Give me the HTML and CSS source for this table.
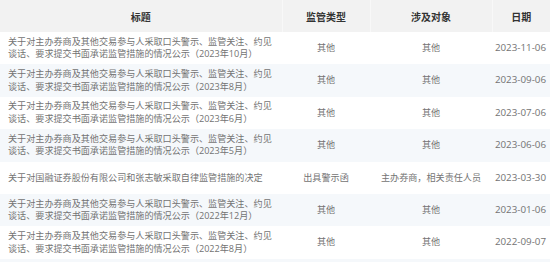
FILE: index.html
```html
<!DOCTYPE html>
<html lang="zh-CN">
<head>
<meta charset="utf-8">
<title>监管措施</title>
<link rel="stylesheet" href="styles.css">
</head>
<body>
<table class="reg-table">
  <colgroup>
    <col class="c-title">
    <col class="c-type">
    <col class="c-target">
    <col class="c-date">
  </colgroup>
  <thead>
    <tr>
      <th>标题</th>
      <th>监管类型</th>
      <th>涉及对象</th>
      <th class="last">日期</th>
    </tr>
  </thead>
  <tbody>
    <tr>
      <td class="title">关于对主办券商及其他交易参与人采取口头警示、监管关注、约见<br>谈话、要求提交书面承诺监管措施的情况公示（2023年10月）</td>
      <td>其他</td>
      <td>其他</td>
      <td class="date">2023-11-06</td>
    </tr>
    <tr class="alt">
      <td class="title">关于对主办券商及其他交易参与人采取口头警示、监管关注、约见<br>谈话、要求提交书面承诺监管措施的情况公示（2023年8月）</td>
      <td>其他</td>
      <td>其他</td>
      <td class="date">2023-09-06</td>
    </tr>
    <tr>
      <td class="title">关于对主办券商及其他交易参与人采取口头警示、监管关注、约见<br>谈话、要求提交书面承诺监管措施的情况公示（2023年6月）</td>
      <td>其他</td>
      <td>其他</td>
      <td class="date">2023-07-06</td>
    </tr>
    <tr class="alt">
      <td class="title">关于对主办券商及其他交易参与人采取口头警示、监管关注、约见<br>谈话、要求提交书面承诺监管措施的情况公示（2023年5月）</td>
      <td>其他</td>
      <td>其他</td>
      <td class="date">2023-06-06</td>
    </tr>
    <tr>
      <td class="title">关于对国融证券股份有限公司和张志敏采取自律监管措施的决定</td>
      <td>出具警示函</td>
      <td>主办券商，相关责任人员</td>
      <td class="date">2023-03-30</td>
    </tr>
    <tr class="alt">
      <td class="title">关于对主办券商及其他交易参与人采取口头警示、监管关注、约见<br>谈话、要求提交书面承诺监管措施的情况公示（2022年12月）</td>
      <td>其他</td>
      <td>其他</td>
      <td class="date">2023-01-06</td>
    </tr>
    <tr>
      <td class="title">关于对主办券商及其他交易参与人采取口头警示、监管关注、约见<br>谈话、要求提交书面承诺监管措施的情况公示（2022年8月）</td>
      <td>其他</td>
      <td>其他</td>
      <td class="date">2022-09-07</td>
    </tr>
    <tr class="alt filler">
      <td></td><td></td><td></td><td></td>
    </tr>
  </tbody>
</table>
</body>
</html>
```

FILE: styles.css
```css
html, body {
  margin: 0;
  padding: 0;
  background: #ffffff;
}
body {
  width: 550px;
  height: 262px;
  overflow: hidden;
  font-family: "Open Sans", "Noto Sans CJK SC", sans-serif;
  color: #737373;
}
.reg-table {
  width: 550px;
  table-layout: fixed;
  border-collapse: collapse;
  border-spacing: 0;
}
.c-title { width: 282px; }
.c-type { width: 88px; }
.c-target { width: 122px; }
.c-date { width: 58px; }

.reg-table th {
  height: 32px;
  padding: 0;
  background: #f2f2f2;
  color: #333333;
  font-size: 10px;
  font-weight: 700;
  text-align: center;
  vertical-align: middle;
  border-right: 1px solid #f8f8f8;
}
.reg-table th.last { border-right: none; }

.reg-table td {
  height: 32.4px;
  padding: 0;
  font-size: 9.1px;
  line-height: 12.5px;
  text-align: center;
  vertical-align: middle;
  white-space: nowrap;
}
.reg-table td.title {
  text-align: left;
  padding-left: 8px;
}
.reg-table td.date {
  font-size: 9.8px;
  text-align: right;
  padding-right: 4px;
}
.reg-table tr.alt td {
  background: #f5f8fb;
}
.reg-table tr.filler td {
  height: 3px;
}
```
